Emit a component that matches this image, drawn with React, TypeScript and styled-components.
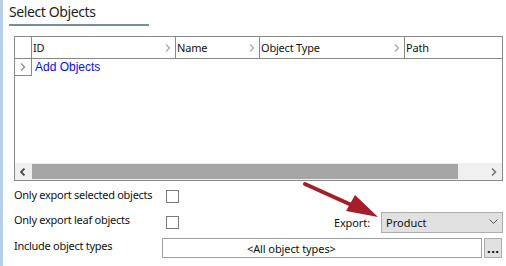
import React from "react";
import styled, { createGlobalStyle } from "styled-components";

const Global = createGlobalStyle`
  html, body { margin: 0; padding: 0; background: #fff; }
  body { font-family: "Noto Sans", "DejaVu Sans", sans-serif; }
`;

const Page = styled.div`
  position: relative;
  display: flex;
  width: 506px;
  height: 266px;
  overflow: hidden;
  background: #fff;
`;

const Strip = styled.div`
  width: 3px;
  background: #b7cfea;
  flex: none;
`;

const Content = styled.div`
  flex: 1;
  display: flex;
  flex-direction: column;
  padding-left: 6px;
`;

const Title = styled.div`
  width: 140px;
  height: 22px;
  margin-top: 2px;
  border-bottom: 2px solid #7b8ba1;
  font-family: "Noto Sans", sans-serif;
  font-size: 14px;
  letter-spacing: -0.4px;
  line-height: 20px;
  color: #1e1e1e;
`;

const Grid = styled.div`
  margin-top: 10px;
  margin-left: 5px;
  width: 487px;
  height: 143px;
  border: 1px solid #898989;
  display: flex;
  flex-direction: column;
`;

const HeaderRow = styled.div`
  display: grid;
  grid-template-columns: 17px 144px 84px 145px 1fr;
  height: 21px;
  border-bottom: 1px solid #898989;
`;

const HeadCell = styled.div<{ last?: boolean }>`
  border-right: ${(p) => (p.last ? "none" : "1px solid #898989")};
  font-family: "Noto Sans", sans-serif;
  font-size: 11px;
  line-height: 21px;
  padding-left: 1px;
  padding-right: 4px;
  color: #111;
  display: flex;
  align-items: center;
  justify-content: space-between;
  letter-spacing: -0.2px;
`;

const Body = styled.div`
  flex: 1;
  display: flex;
  flex-direction: column;
`;

const DataRow = styled.div`
  display: flex;
  height: 17px;
`;

const Selector = styled.div`
  width: 16px;
  height: 16px;
  border-right: 1px solid #898989;
  border-bottom: 1px solid #898989;
  display: flex;
  align-items: center;
  justify-content: center;
`;

const AddLink = styled.div`
  font-family: "Liberation Sans", Arial, sans-serif;
  font-size: 12px;
  line-height: 17px;
  color: #0a0aff;
  padding-left: 3px;
`;

const HScroll = styled.div`
  margin-top: auto;
  height: 17px;
  display: flex;
  background: #f0f0f0;
`;

const ScrollBtn = styled.div`
  width: 16px;
  display: flex;
  align-items: center;
  justify-content: center;
`;

const Thumb = styled.div`
  width: 426px;
  margin: 1px 0 1px 1px;
  background: #a6a6a6;
`;

const Track = styled.div`
  flex: 1;
`;

const Form = styled.div`
  margin-top: 3px;
  margin-left: 5px;
  display: flex;
  flex-direction: column;
`;

const FormRow = styled.div<{ h: number }>`
  display: flex;
  align-items: center;
  height: ${(p) => p.h}px;
`;

const Label = styled.div<{ lift: number }>`
  width: 148px;
  padding-bottom: ${(p) => p.lift}px;
  font-family: "Noto Sans", sans-serif;
  font-size: 11px;
  color: #111;
  letter-spacing: -0.27px;
`;

const Check = styled.div`
  width: 11px;
  height: 11px;
  margin-left: 4px;
  border: 1px solid #7a7a7a;
  background: #fff;
`;

const Spacer = styled.div`
  flex: 1;
`;

const ExportLabel = styled.div`
  font-family: "Noto Sans", sans-serif;
  font-size: 11px;
  letter-spacing: -0.1px;
  color: #111;
  margin-right: 11px;
`;

const Select = styled.div`
  width: 122px;
  height: 21px;
  border: 1px solid #adadad;
  background: #e1e1e1;
  display: flex;
  align-items: center;
  justify-content: space-between;
  padding-left: 4px;
  padding-right: 4px;
  box-sizing: border-box;
  font-family: "Noto Sans", sans-serif;
  font-size: 11px;
  color: #111;
  margin-right: 3px;
`;

const TextBox = styled.div`
  width: 318px;
  height: 18px;
  border: 1px solid #a0a0a0;
  display: flex;
  align-items: center;
  padding-left: 84px;
  box-sizing: content-box;
  width: 234px;
  font-family: "Noto Sans", sans-serif;
  font-size: 11px;
  letter-spacing: -0.1px;
  color: #111;
`;

const DotsBtn = styled.div`
  width: 16px;
  height: 18px;
  margin-left: 2px;
  border: 1px solid #adadad;
  background: #e1e1e1;
  display: flex;
  align-items: flex-end;
  justify-content: center;
  font-family: "DejaVu Sans", sans-serif;
  font-size: 11px;
  font-weight: bold;
  line-height: 14px;
  color: #111;
`;

const ArrowOverlay = styled.svg`
  position: absolute;
  left: 0;
  top: 0;
  pointer-events: none;
`;

type Dir = "left" | "right" | "down";

const Chevron = ({ dir, color, w = 1.4 }: { dir: Dir; color: string; w?: number }) => {
  if (dir === "down") {
    return (
      <svg width={9} height={6} viewBox="0 0 9 6">
        <path d="M0.5 0.5 L4.5 4.5 L8.5 0.5" fill="none" stroke={color} strokeWidth={1} />
      </svg>
    );
  }
  const d = dir === "left" ? "M4.5 0.5 L1 4 L4.5 7.5" : "M1 0.5 L4.5 4 L1 7.5";
  return (
    <svg width={6} height={8} viewBox="0 0 6 8">
      <path d={d} fill="none" stroke={color} strokeWidth={w} />
    </svg>
  );
};

export default function App() {
  const cols = ["ID", "Name", "Object Type", "Path"];
  return (
    <>
      <Global />
      <Page>
        <Strip />
        <Content>
          <Title>Select Objects</Title>
          <Grid>
            <HeaderRow>
              <HeadCell />
              {cols.map((c, i) => (
                <HeadCell key={c} last={i === cols.length - 1}>
                  <span>{c}</span>
                  {i < cols.length - 1 && <Chevron dir="right" color="#a8a8a8" w={1.2} />}
                </HeadCell>
              ))}
            </HeaderRow>
            <Body>
              <DataRow>
                <Selector>
                  <Chevron dir="right" color="#8c8c8c" w={1.3} />
                </Selector>
                <AddLink>Add Objects</AddLink>
              </DataRow>
              <HScroll>
                <ScrollBtn>
                  <Chevron dir="left" color="#4a4a4a" w={1.8} />
                </ScrollBtn>
                <Thumb />
                <Track />
                <ScrollBtn>
                  <Chevron dir="right" color="#6a6a6a" w={1.4} />
                </ScrollBtn>
              </HScroll>
            </Body>
          </Grid>
          <Form>
            <FormRow h={25}>
              <Label lift={5}>Only export selected objects</Label>
              <Check />
            </FormRow>
            <FormRow h={26}>
              <Label lift={6}>Only export leaf objects</Label>
              <Check />
              <Spacer />
              <ExportLabel>Export:</ExportLabel>
              <Select>
                <span>Product</span>
                <Chevron dir="down" color="#555" />
              </Select>
            </FormRow>
            <FormRow h={26}>
              <Label lift={6}>Include object types</Label>
              <TextBox>&lt;All object types&gt;</TextBox>
              <DotsBtn>...</DotsBtn>
            </FormRow>
          </Form>
        </Content>
        <ArrowOverlay width={506} height={266} viewBox="0 0 506 266">
          <line x1={305} y1={184} x2={356} y2={207} stroke="#a51e2b" strokeWidth={4} strokeLinecap="round" />
          <polygon points="378,217 346,211 355,195" fill="#a51e2b" />
        </ArrowOverlay>
      </Page>
    </>
  );
}
